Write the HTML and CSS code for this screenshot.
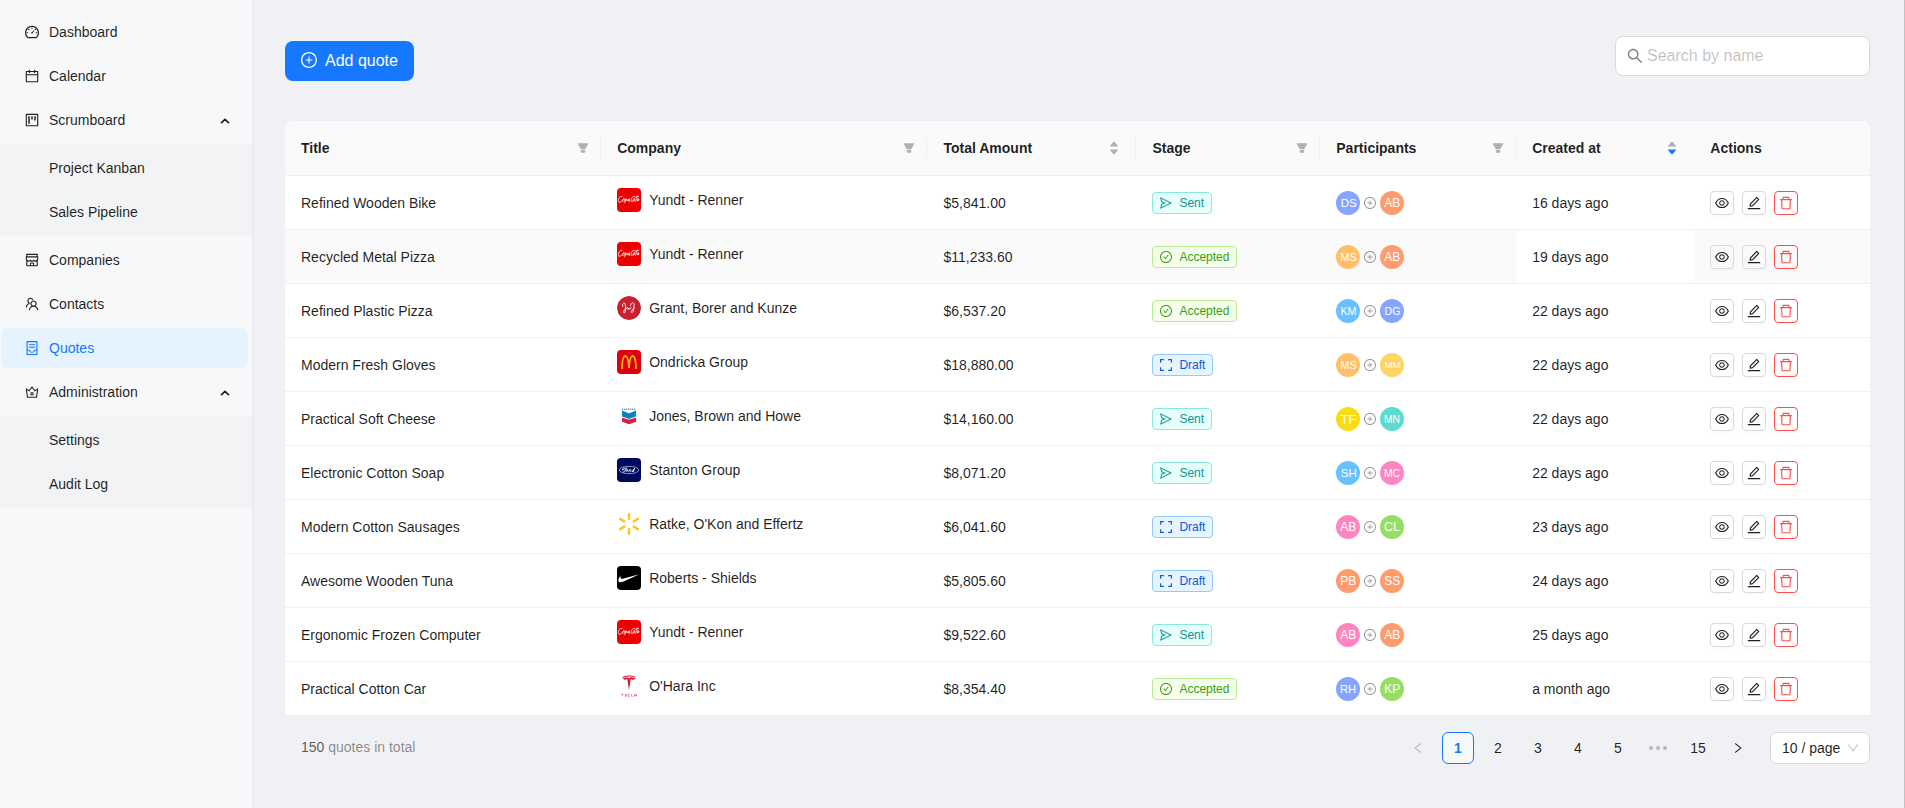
FILE: index.html
```html
<!DOCTYPE html>
<html lang="en">
<head>
<meta charset="utf-8">
<title>Quotes</title>
<link rel="stylesheet" href="styles.css">
</head>
<body>
<svg class="sprite" aria-hidden="true">
  <symbol id="i-dashboard" viewBox="64 64 896 896"><path d="M924.8 385.6a446.7 446.7 0 00-96-142.4 446.7 446.7 0 00-142.4-96C631.1 123.8 572.5 112 512 112s-119.1 11.8-174.4 35.2a446.7 446.7 0 00-142.4 96 446.7 446.7 0 00-96 142.4C75.8 440.9 64 499.5 64 560c0 132.7 58.3 257.7 159.9 343.1l1.7 1.4c5.8 4.8 13.1 7.5 20.6 7.5h531.7c7.5 0 14.8-2.7 20.6-7.5l1.7-1.4C901.7 817.7 960 692.7 960 560c0-60.5-11.9-119.1-35.2-174.4zM761.4 836H262.6A371.12 371.12 0 01140 560c0-99.4 38.7-192.8 109-263 70.3-70.3 163.7-109 263-109 99.4 0 192.8 38.7 263 109 70.3 70.3 109 163.7 109 263 0 105.6-44.5 205.5-122.6 276zM623.5 421.5a8.03 8.03 0 00-11.3 0L527.7 506c-18.7-5-39.4-.2-54.1 14.5a55.95 55.95 0 000 79.2 55.95 55.95 0 0079.2 0 55.87 55.87 0 0014.5-54.1l84.5-84.5c3.1-3.1 3.1-8.2 0-11.3l-28.3-28.3zM490 320h44c4.4 0 8-3.6 8-8v-80c0-4.4-3.6-8-8-8h-44c-4.4 0-8 3.6-8 8v80c0 4.4 3.6 8 8 8zm260 218v44c0 4.4 3.6 8 8 8h80c4.4 0 8-3.6 8-8v-44c0-4.4-3.6-8-8-8h-80c-4.4 0-8 3.6-8 8zm12.7-197.2l-31.1-31.1a8.03 8.03 0 00-11.3 0l-56.6 56.6a8.03 8.03 0 000 11.3l31.1 31.1c3.1 3.1 8.2 3.1 11.3 0l56.6-56.6c3.1-3.1 3.1-8.2 0-11.3zm-458.6-31.1a8.03 8.03 0 00-11.3 0l-31.1 31.1a8.03 8.03 0 000 11.3l56.6 56.6c3.1 3.1 8.2 3.1 11.3 0l31.1-31.1c3.1-3.1 3.1-8.2 0-11.3l-56.6-56.6zM262 530h-80c-4.4 0-8 3.6-8 8v44c0 4.4 3.6 8 8 8h80c4.4 0 8-3.6 8-8v-44c0-4.4-3.6-8-8-8z"/></symbol>
  <symbol id="i-calendar" viewBox="64 64 896 896"><path d="M880 184H712v-64c0-4.4-3.6-8-8-8h-56c-4.4 0-8 3.6-8 8v64H384v-64c0-4.4-3.6-8-8-8h-56c-4.4 0-8 3.6-8 8v64H144c-17.7 0-32 14.3-32 32v664c0 17.7 14.3 32 32 32h736c17.7 0 32-14.3 32-32V216c0-17.7-14.3-32-32-32zm-40 656H184V460h656v380zM184 392V256h128v48c0 4.4 3.6 8 8 8h56c4.4 0 8-3.6 8-8v-48h256v48c0 4.4 3.6 8 8 8h56c4.4 0 8-3.6 8-8v-48h128v136H184z"/></symbol>
  <symbol id="i-project" viewBox="64 64 896 896"><path d="M280 752h80c4.4 0 8-3.6 8-8V280c0-4.4-3.6-8-8-8h-80c-4.4 0-8 3.6-8 8v464c0 4.4 3.6 8 8 8zm192-280h80c4.4 0 8-3.6 8-8V280c0-4.4-3.6-8-8-8h-80c-4.4 0-8 3.6-8 8v184c0 4.4 3.6 8 8 8zm192 72h80c4.4 0 8-3.6 8-8V280c0-4.4-3.6-8-8-8h-80c-4.4 0-8 3.6-8 8v256c0 4.4 3.6 8 8 8zm216-432H144c-17.7 0-32 14.3-32 32v736c0 17.7 14.3 32 32 32h736c17.7 0 32-14.3 32-32V144c0-17.7-14.3-32-32-32zm-40 728H184V184h656v656z"/></symbol>
  <symbol id="i-shop" viewBox="64 64 896 896"><path d="M882 272.1V144c0-17.7-14.3-32-32-32H174c-17.7 0-32 14.3-32 32v128.1c-16.7 1-30 14.9-30 31.9v131.7a177 177 0 0014.4 70.4c4.3 10.2 9.6 19.8 15.6 28.9v345c0 17.6 14.3 32 32 32h676c17.7 0 32-14.3 32-32V535a175 175 0 0015.6-28.9c9.5-22.3 14.4-46 14.4-70.4V304c0-17-13.3-30.9-30-31.9zM214 184h596v88H214v-88zm362 656.1H448V736h128v104.1zm234 0H640V704c0-17.7-14.3-32-32-32H416c-17.7 0-32 14.3-32 32v136.1H214V597.9c2.9 1.4 5.9 2.8 9 4 22.3 9.4 46 14.1 70.4 14.1s48-4.7 70.4-14.1c13.8-5.8 26.8-13.2 38.7-22.1.2-.1.4-.1.6 0a180.4 180.4 0 0038.7 22.1c22.3 9.4 46 14.1 70.4 14.1 24.4 0 48-4.7 70.4-14.1 13.8-5.8 26.8-13.2 38.7-22.1.2-.1.4-.1.6 0a180.4 180.4 0 0038.7 22.1c22.3 9.4 46 14.1 70.4 14.1 24.4 0 48-4.7 70.4-14.1 3-1.3 6-2.6 9-4v242.2zm30-404.4c0 59.8-49 108.3-109.3 108.3-40.8 0-76.4-22.1-95.2-54.9-2.9-5-8.1-8.1-13.9-8.1h-.6c-5.7 0-11 3.1-13.9 8.1A109.24 109.24 0 01512 544c-40.7 0-76.2-22-95-54.7-3-5.1-8.4-8.3-14.3-8.3s-11.4 3.2-14.3 8.3a109.63 109.63 0 01-95.1 54.7C233 544 184 495.5 184 435.7v-91.2c0-.3.2-.5.5-.5h655c.3 0 .5.2.5.5v91.2z"/></symbol>
  <symbol id="i-team" viewBox="64 64 896 896"><path d="M824.2 699.9a301.55 301.55 0 00-86.4-60.4C783.1 602.8 812 546.8 812 484c0-110.8-92.4-201.7-203.2-200-109.1 1.7-197 90.6-197 200 0 62.8 29 118.8 74.2 155.5a300.95 300.95 0 00-86.4 60.4C345 754.6 314 826.8 312 903.8a8 8 0 008 8.2h56c4.3 0 7.9-3.4 8-7.7 1.9-58 25.4-112.3 66.7-153.5A226.62 226.62 0 01612 684c60.9 0 118.2 23.7 161.3 66.8C814.6 792 838 846.3 840 904.3c.1 4.3 3.7 7.7 8 7.7h56a8 8 0 008-8.2c-2-77-33-149.2-87.8-203.9zM612 612c-34.2 0-66.4-13.3-90.5-37.5a126.86 126.86 0 01-37.5-91.8c.3-32.8 13.4-64.5 36.3-88 24-24.6 56.1-38.3 90.4-38.7 33.9-.3 66.8 12.9 91 36.6 24.8 24.3 38.4 56.8 38.4 91.4 0 34.2-13.3 66.3-37.5 90.5A127.3 127.3 0 01612 612zM361.5 510.4c-.9-8.7-1.4-17.5-1.4-26.4 0-15.9 1.5-31.4 4.3-46.5.7-3.6-1.2-7.3-4.5-8.8-13.6-6.1-26.1-14.5-36.9-25.1a127.54 127.54 0 01-38.7-95.4c.9-32.1 13.8-62.6 36.3-85.6 24.7-25.3 57.9-39.1 93.2-38.7 31.9.3 62.7 12.6 86 34.4 7.9 7.4 14.7 15.6 20.4 24.4 2 3.1 5.9 4.4 9.3 3.2 17.6-6.1 36.2-10.4 55.3-12.4 5.6-.6 8.8-6.6 6.3-11.6-32.5-64.3-98.9-108.7-175.7-109.9-110.9-1.7-203.3 89.2-203.3 199.9 0 62.8 28.9 118.8 74.2 155.5-31.8 14.7-61.1 35-86.5 60.4-54.8 54.7-85.8 126.9-87.8 204a8 8 0 008 8.2h56.1c4.3 0 7.9-3.4 8-7.7 1.9-58 25.4-112.3 66.7-153.5 29.4-29.4 65.4-49.8 104.7-59.7 3.9-1 6.5-4.7 6-8.7z"/></symbol>
  <symbol id="i-container" viewBox="64 64 896 896"><path d="M832 64H192c-17.7 0-32 14.3-32 32v832c0 17.7 14.3 32 32 32h640c17.7 0 32-14.3 32-32V96c0-17.7-14.3-32-32-32zm-40 824H232V687h97.9c11.6 32.8 32 62.3 59.1 84.7 34.5 28.5 78.2 44.3 123 44.3s88.5-15.7 123-44.3c27.1-22.4 47.5-51.9 59.1-84.7H792v201zm0-264H643.6l-5.2 24.7C626.4 708.5 573.2 752 512 752s-114.4-43.5-126.5-103.3l-5.2-24.7H232V136h560v488zM320 341h384c4.4 0 8-3.6 8-8v-48c0-4.4-3.6-8-8-8H320c-4.4 0-8 3.6-8 8v48c0 4.4 3.6 8 8 8zm0 160h384c4.4 0 8-3.6 8-8v-48c0-4.4-3.6-8-8-8H320c-4.4 0-8 3.6-8 8v48c0 4.4 3.6 8 8 8z"/></symbol>
  <symbol id="i-crown" viewBox="64 64 896 896"><path d="M899.6 276.5L705 396.4 518.4 147.5a8.06 8.06 0 00-12.9 0L319 396.4 124.3 276.5c-5.7-3.5-13.1 1.2-12.2 7.9L188.5 865c1.1 7.9 7.9 14 16 14h615.1c8 0 14.9-6 15.9-14l76.4-580.6c.8-6.7-6.5-11.4-12.3-7.9zm-126 534.1H250.3l-53.8-409.4 139.8 86.1L512 252.9l175.7 234.4 139.8-86.1-53.9 409.4zM512 509c-62.1 0-112.6 50.5-112.6 112.6S449.9 734.2 512 734.2s112.6-50.5 112.6-112.6S574.1 509 512 509zm0 160.9c-26.6 0-48.2-21.6-48.2-48.3 0-26.6 21.6-48.3 48.2-48.3s48.2 21.6 48.2 48.3c0 26.6-21.6 48.3-48.2 48.3z"/></symbol>
  <symbol id="i-plus" viewBox="64 64 896 896"><path d="M696 480H544V328c0-4.4-3.6-8-8-8h-48c-4.4 0-8 3.6-8 8v152H328c-4.4 0-8 3.6-8 8v48c0 4.4 3.6 8 8 8h152v152c0 4.4 3.6 8 8 8h48c4.4 0 8-3.6 8-8V544h152c4.4 0 8-3.6 8-8v-48c0-4.4-3.6-8-8-8z"/><path d="M512 64C264.6 64 64 264.6 64 512s200.6 448 448 448 448-200.6 448-448S759.4 64 512 64zm0 820c-205.4 0-372-166.6-372-372s166.6-372 372-372 372 166.6 372 372-166.6 372-372 372z"/></symbol>
  <symbol id="i-check" viewBox="64 64 896 896"><path d="M699 353h-46.9c-10.2 0-19.9 4.9-25.9 13.3L469 584.3l-71.2-98.8c-6-8.3-15.6-13.3-25.9-13.3H325c-6.5 0-10.3 7.4-6.5 12.7l124.6 172.8a31.8 31.8 0 0051.7 0l210.6-292c3.9-5.3.1-12.7-6.4-12.7z"/><path d="M512 64C264.6 64 64 264.6 64 512s200.6 448 448 448 448-200.6 448-448S759.4 64 512 64zm0 820c-205.4 0-372-166.6-372-372s166.6-372 372-372 372 166.6 372 372-166.6 372-372 372z"/></symbol>
  <symbol id="i-search" viewBox="64 64 896 896"><path d="M909.6 854.5L649.9 594.8C690.2 542.7 712 479 712 412c0-80.2-31.3-155.4-87.9-212.1-56.6-56.7-132-87.9-212.1-87.9s-155.5 31.3-212.1 87.9C143.2 256.5 112 331.8 112 412c0 80.1 31.3 155.5 87.9 212.1C256.5 680.8 331.8 712 412 712c67 0 130.6-21.8 182.7-62l259.7 259.6a8.2 8.2 0 0011.6 0l43.6-43.5a8.2 8.2 0 000-11.6zM570.4 570.4C528 612.7 471.8 636 412 636s-116-23.3-158.4-65.6C211.3 528 188 471.8 188 412s23.3-116.1 65.6-158.4C296 211.3 352.2 188 412 188s116.1 23.2 158.4 65.6S636 352.2 636 412s-23.3 116.1-65.6 158.4z"/></symbol>
  <symbol id="i-filter" viewBox="64 64 896 896"><path d="M349 838c0 17.7 14.2 32 31.8 32h262.4c17.6 0 31.8-14.3 31.8-32V642H349v196zm531.1-684H143.9c-24.5 0-39.8 26.7-27.5 48l221.3 376h348.8l221.3-376c12.1-21.3-3.2-48-27.7-48z"/></symbol>
  <symbol id="i-caret-up" viewBox="0 0 1024 1024"><path d="M858.9 689L530.5 308.2c-9.4-10.9-27.5-10.9-37 0L165.1 689c-12.2 14.2-1.2 35 18.5 35h656.8c19.7 0 30.7-20.8 18.5-35z"/></symbol>
  <symbol id="i-caret-down" viewBox="0 0 1024 1024"><path d="M840.4 300H183.6c-19.7 0-30.7 20.8-18.5 35l328.4 380.8c9.4 10.9 27.5 10.9 37 0L858.9 335c12.2-14.2 1.2-35-18.5-35z"/></symbol>
  <symbol id="i-eye" viewBox="64 64 896 896"><path d="M942.2 486.2C847.4 286.5 704.1 186 512 186c-192.2 0-335.4 100.5-430.2 300.3a60.3 60.3 0 000 51.5C176.6 737.5 319.9 838 512 838c192.2 0 335.4-100.5 430.2-300.3 7.7-16.2 7.7-35 0-51.5zM512 766c-161.3 0-279.4-81.8-362.7-254C232.6 339.8 350.7 258 512 258c161.3 0 279.4 81.8 362.7 254C791.5 684.2 673.4 766 512 766zm-4-430c-97.2 0-176 78.8-176 176s78.8 176 176 176 176-78.8 176-176-78.8-176-176-176zm0 288c-61.9 0-112-50.1-112-112s50.1-112 112-112 112 50.1 112 112-50.1 112-112 112z"/></symbol>
  <symbol id="i-edit" viewBox="64 64 896 896"><path d="M257.7 752c2 0 4-.2 6-.5L431.9 722c2-.4 3.9-1.3 5.3-2.8l423.9-423.9a9.96 9.96 0 000-14.1L694.9 114.9c-1.9-1.9-4.4-2.9-7.1-2.9s-5.2 1-7.1 2.9L256.8 538.8c-1.5 1.5-2.4 3.3-2.8 5.3l-29.5 168.2a33.5 33.5 0 009.4 29.8c6.6 6.4 14.9 9.9 23.8 9.9zm67.4-174.4L687.8 215l73.3 73.3-362.7 362.6-88.9 15.7 15.6-89zM880 836H144c-17.7 0-32 14.3-32 32v36c0 4.4 3.6 8 8 8h784c4.4 0 8-3.6 8-8v-36c0-17.7-14.3-32-32-32z"/></symbol>
  <symbol id="i-delete" viewBox="64 64 896 896"><path d="M360 184h-8c4.4 0 8-3.6 8-8v8h304v-8c0 4.4 3.6 8 8 8h-8v72h72v-80c0-35.3-28.7-64-64-64H352c-35.3 0-64 28.7-64 64v80h72v-72zm504 72H160c-17.7 0-32 14.3-32 32v32c0 4.4 3.6 8 8 8h60.4l24.7 523c1.6 34.1 29.8 61 63.9 61h454c34.2 0 62.3-26.8 63.9-61l24.7-523H888c4.4 0 8-3.6 8-8v-32c0-17.7-14.3-32-32-32zM731.3 840H292.7l-24.2-512h487l-24.2 512z"/></symbol>
  <symbol id="i-send" viewBox="64 64 896 896"><path d="M931.4 498.9L94.9 79.5c-3.4-1.7-7.3-2.1-11-1.2a15.99 15.99 0 00-11.7 19.3l86.2 352.2c1.3 5.3 5.2 9.6 10.4 11.3l147.7 50.7-147.6 50.7c-5.2 1.8-9.1 6-10.3 11.3L72.2 926.5c-.9 3.7-.5 7.6 1.2 10.9 3.9 7.9 13.5 11.1 21.5 7.2l836.5-417c3.1-1.5 5.6-4.1 7.2-7.1 3.9-8 .7-17.6-7.2-21.6zM170.8 826.3l50.3-205.6 295.2-101.3c2.3-.8 4.2-2.6 5-5 1.4-4.2-.8-8.7-5-10.2L221.1 403 171 198.2l628 314.9-628.2 313.2z"/></symbol>
  <symbol id="i-draft" viewBox="0 0 12 12"><path fill="none" stroke="currentColor" stroke-width="1.1" d="M.6 3.8V.6h3.200M8.200 .6h3.200v3.200M11.400 8.200v3.200H8.200M3.800 11.400H.6V8.200"/></symbol>
  <symbol id="i-chevron" viewBox="0 0 10 6"><path fill="none" stroke="currentColor" stroke-width="1.7" stroke-linecap="round" d="M1.5 4.6L5 1.3l3.5 3.3"/></symbol>
  <symbol id="i-left" viewBox="64 64 896 896"><path d="M724 218.3V141c0-6.7-7.7-10.4-12.9-6.3L260.3 486.8a31.86 31.86 0 000 50.3l450.8 352.1c5.3 4.1 12.9.4 12.9-6.3v-77.3c0-4.900-2.300-9.600-6.100-12.600l-360-281 360-281.100c3.800-3 6.100-7.700 6.100-12.600z"/></symbol>
  <symbol id="i-right" viewBox="64 64 896 896"><path d="M765.7 486.8L314.9 134.7A7.97 7.97 0 00302 141v77.3c0 4.9 2.3 9.6 6.1 12.6l360 281.1-360 281.1c-3.9 3-6.1 7.7-6.1 12.6V883c0 6.7 7.7 10.4 12.9 6.3l450.8-352.1a31.96 31.96 0 000-50.4z"/></symbol>
  <symbol id="i-down" viewBox="64 64 896 896"><path d="M884 256h-75c-5.1 0-9.9 2.5-12.9 6.6L512 654.2 227.9 262.6c-3-4.1-7.8-6.6-12.9-6.6h-75c-6.5 0-10.3 7.4-6.5 12.7l352.6 486.1c12.8 17.6 39 17.6 51.7 0l352.6-486.1c3.9-5.3.1-12.7-6.4-12.7z"/></symbol>
  <symbol id="i-dots" viewBox="0 0 18 4"><circle cx="2" cy="2" r="1.9"/><circle cx="9" cy="2" r="1.9"/><circle cx="16" cy="2" r="1.9"/></symbol>

  <symbol id="l-cola" viewBox="0 0 24 24"><path fill="#ee0000" d="M0 0h24v24H0z"/><path fill="#dc0000" d="M10 0q4 3 3 8l-3 6q1 6 7 10h-4Q6 18 8 12z" opacity=".5"/><g fill="none" stroke="#fff" stroke-width=".9" stroke-linecap="round" opacity=".8"><path d="M5 8.400Q3.200 7.600 1.900 10.200t.1 4.200q1.400.6 2.800-1.600M6.800 10.800q-1.800.6-1.500 2.400.8 1 1.900-.8.600-1.600-.4-1.600zM8.600 11l-1 3.800M9 11q1.600-.4.900 1.200t-1.800.8M12.200 10.800q-1.900.2-1.700 2 1.200.8 2-1.500l-.2 2.200M17.400 8.200q-3 .4-3.600 3.800 0 2.600 2.600.8M17.200 10.800q-1.600.6-1 2.200 1.400.2 1.600-1.200 0-1-.6-1zM20.200 7.800l-1.600 5.400M18 9.200q2 .4 3.800-.8M21.600 10.600q-1.800.2-1.500 2.200 1.200.2 1.700-1.600l-.2 1.600"/></g></symbol>
  <symbol id="l-jj" viewBox="0 0 24 24"><circle cx="12" cy="12" r="12" fill="#c91f2e"/><g fill="none" stroke="#fff" stroke-width="1" stroke-linecap="round" opacity=".85"><path d="M5.600 10.400Q5 7.400 6.800 7q2-.2 1.700 3.600 0 6.400-1.500 6.400-1.300-.6.600-3.400l3.200-2.200v1.800l1.200-1v1.200l2.200-1.600M13.400 9.800Q13.800 6.600 16 6.600q1.800.4 1 4.200-.6 6-2.200 6-1.200-.8.6-3.200l2.200-1.800"/></g></symbol>
  <symbol id="l-arches" viewBox="0 0 24 24"><path fill="#dd0010" d="M0 0h24v24H0z"/><path fill="none" stroke="#ffbc0d" stroke-width="1.8" d="M4.900 19Q5.200 6 8.400 5.800q3 .2 3.600 12.200.6-12 3.600-12.200Q18.800 6 19.100 19"/></symbol>
  <symbol id="l-chevrons" viewBox="0 0 24 24"><path fill="#fff" d="M0 0h24v24H0z"/><path stroke="#1c76b2" stroke-width="1.500" stroke-dasharray="1.300 .7" opacity=".7" d="M5 5.200h14"/><path fill="#0a84c1" d="M5 6.500l7 2.700 7-2.700v5.700l-7 2.500-7-2.500z"/><path fill="#fff" d="M8 6.700h8l-4 2.600z"/><path fill="#1c7fc0" d="M5 11l7 2.600 7-2.600v1.200l-7 2.500-7-2.500z"/><path fill="#dc1e3e" d="M5 13.400l7 2.400 7-2.400v4.300l-7 2.500-7-2.500z"/></symbol>
  <symbol id="l-oval" viewBox="0 0 24 24"><path fill="#00095b" d="M0 0h24v24H0z"/><ellipse cx="12" cy="12" rx="9.700" ry="3.700" fill="none" stroke="#a9b4dc" stroke-width=".8"/><path fill="none" stroke="#e4e8f6" stroke-width=".85" stroke-linecap="round" d="M9.400 10.200Q5.600 9.600 5 11.600q.6 1 1.700 0M9.700 9.900L7.500 14H6M7.800 12h1.700M10.500 11.900q-1.200.3-.8 1.600 1.200 0 1.300-1.500M12.400 11.800l-.6 2M12.600 12.400q1.800-1.600 1.500-.2l-.5 1.600M16.600 12q-1.600-.1-1.400 1.500 1.400.2 1.500-1.400l1-2.100-1.300 3.700"/></symbol>
  <symbol id="l-spark" viewBox="0 0 24 24"><path fill="#fff" d="M0 0h24v24H0z"/><path fill="none" stroke="#ffc220" stroke-width="2.500" stroke-linecap="round" d="M12 2.200v4.600M12 17.200v4.600M3.200 6.900l4.100 2.400M16.700 14.700l4.100 2.400M3.200 17.100l4.100-2.400M16.700 9.300l4.100-2.400"/></symbol>
  <symbol id="l-swoosh" viewBox="0 0 24 24"><path d="M0 0h24v24H0z" fill="#000"/><path fill="#fff" d="M22.400 8.200L6.600 15.500Q3.400 17 1.800 15.700.2 14 3.700 9.300q-1 2.700.2 3.300.9.400 2.700 0z"/></symbol>
  <symbol id="l-tee" viewBox="0 0 24 24"><path fill="#fff" d="M0 0h24v24H0z"/><path fill="#e31937" d="M5.200 2.900Q12 .3 18.800 2.900l-.3.700Q12 1.500 5.500 3.600zM12 16.600L10.300 5.300Q8.500 5.200 8.400 6 6.300 5.600 5.600 4.100 9.300 3 10.900 3.200L12 4.500l1.100-1.300q1.600-.2 5.300.9-.7 1.500-2.800 1.900-.1-.8-1.900-.7z"/><path stroke="#e31937" stroke-width=".7" opacity=".65" fill="none" d="M4.300 20.300h2.200M5.400 20.300v2M10 20.300H8.200v1h1.700v1H8M13 20.300h-1.700v2H13M14.500 20v2.300h1.800M17.500 22.500v-2h2v2M17.500 21.500h2"/></symbol>
</svg>

<div class="app">
  <aside class="sider">
    <nav class="menu">
      <a class="item"><svg><use href="#i-dashboard"/></svg><span>Dashboard</span></a>
      <a class="item"><svg><use href="#i-calendar"/></svg><span>Calendar</span></a>
      <a class="item"><svg><use href="#i-project"/></svg><span>Scrumboard</span><svg class="arrow"><use href="#i-chevron"/></svg></a>
      <div class="submenu"><a class="item sub">Project Kanban</a><a class="item sub">Sales Pipeline</a></div>
      <a class="item"><svg><use href="#i-shop"/></svg><span>Companies</span></a>
      <a class="item"><svg><use href="#i-team"/></svg><span>Contacts</span></a>
      <a class="item selected"><svg><use href="#i-container"/></svg><span>Quotes</span></a>
      <a class="item"><svg><use href="#i-crown"/></svg><span>Administration</span><svg class="arrow"><use href="#i-chevron"/></svg></a>
      <div class="submenu"><a class="item sub">Settings</a><a class="item sub">Audit Log</a></div>
    </nav>
  </aside>

  <main class="content">
    <header class="toolbar">
      <button class="add"><svg><use href="#i-plus"/></svg>Add quote</button>
      <label class="search"><svg><use href="#i-search"/></svg><input type="text" placeholder="Search by name"></label>
    </header>

    <section class="table">
      <div class="row head">
        <div class="th">Title<svg class="filter"><use href="#i-filter"/></svg></div>
        <div class="th">Company<svg class="filter"><use href="#i-filter"/></svg></div>
        <div class="th">Total Amount<span class="sorter"><svg><use href="#i-caret-up"/></svg><svg><use href="#i-caret-down"/></svg></span></div>
        <div class="th">Stage<svg class="filter"><use href="#i-filter"/></svg></div>
        <div class="th">Participants<svg class="filter"><use href="#i-filter"/></svg></div>
        <div class="th plain">Created at<span class="sorter desc"><svg><use href="#i-caret-up"/></svg><svg><use href="#i-caret-down"/></svg></span></div>
        <div class="th plain">Actions</div>
      </div>

      <div class="row">
        <div class="td">Refined Wooden Bike</div>
        <div class="td company"><svg><use href="#l-cola"/></svg>Yundt - Renner</div>
        <div class="td">$5,841.00</div>
        <div class="td"><span class="tag sent"><svg><use href="#i-send"/></svg>Sent</span></div>
        <div class="td people"><span class="avatar indigo"><b style="--s:.823">DS</b></span><svg><use href="#i-plus"/></svg><span class="avatar coral"><b style="--s:.857">AB</b></span></div>
        <div class="td sorted">16 days ago</div>
        <div class="td actions"><button><svg><use href="#i-eye"/></svg></button><button><svg><use href="#i-edit"/></svg></button><button class="danger"><svg><use href="#i-delete"/></svg></button></div>
      </div>
      <div class="row hover">
        <div class="td">Recycled Metal Pizza</div>
        <div class="td company"><svg><use href="#l-cola"/></svg>Yundt - Renner</div>
        <div class="td">$11,233.60</div>
        <div class="td"><span class="tag accepted"><svg><use href="#i-check"/></svg>Accepted</span></div>
        <div class="td people"><span class="avatar orange"><b style="--s:.762">MS</b></span><svg><use href="#i-plus"/></svg><span class="avatar coral"><b style="--s:.857">AB</b></span></div>
        <div class="td sorted">19 days ago</div>
        <div class="td actions"><button><svg><use href="#i-eye"/></svg></button><button><svg><use href="#i-edit"/></svg></button><button class="danger"><svg><use href="#i-delete"/></svg></button></div>
      </div>
      <div class="row">
        <div class="td">Refined Plastic Pizza</div>
        <div class="td company"><svg class="round"><use href="#l-jj"/></svg>Grant, Borer and Kunze</div>
        <div class="td">$6,537.20</div>
        <div class="td"><span class="tag accepted"><svg><use href="#i-check"/></svg>Accepted</span></div>
        <div class="td people"><span class="avatar sky"><b style="--s:.762">KM</b></span><svg><use href="#i-plus"/></svg><span class="avatar indigo"><b style="--s:.762">DG</b></span></div>
        <div class="td sorted">22 days ago</div>
        <div class="td actions"><button><svg><use href="#i-eye"/></svg></button><button><svg><use href="#i-edit"/></svg></button><button class="danger"><svg><use href="#i-delete"/></svg></button></div>
      </div>
      <div class="row">
        <div class="td">Modern Fresh Gloves</div>
        <div class="td company"><svg><use href="#l-arches"/></svg>Ondricka Group</div>
        <div class="td">$18,880.00</div>
        <div class="td"><span class="tag draft"><svg><use href="#i-draft"/></svg>Draft</span></div>
        <div class="td people"><span class="avatar orange"><b style="--s:.762">MS</b></span><svg><use href="#i-plus"/></svg><span class="avatar gold"><b style="--s:.686">MM</b></span></div>
        <div class="td sorted">22 days ago</div>
        <div class="td actions"><button><svg><use href="#i-eye"/></svg></button><button><svg><use href="#i-edit"/></svg></button><button class="danger"><svg><use href="#i-delete"/></svg></button></div>
      </div>
      <div class="row">
        <div class="td">Practical Soft Cheese</div>
        <div class="td company"><svg><use href="#l-chevrons"/></svg>Jones, Brown and Howe</div>
        <div class="td">$14,160.00</div>
        <div class="td"><span class="tag sent"><svg><use href="#i-send"/></svg>Sent</span></div>
        <div class="td people"><span class="avatar yellow"><b style="--s:.936">TF</b></span><svg><use href="#i-plus"/></svg><span class="avatar teal"><b style="--s:.735">MN</b></span></div>
        <div class="td sorted">22 days ago</div>
        <div class="td actions"><button><svg><use href="#i-eye"/></svg></button><button><svg><use href="#i-edit"/></svg></button><button class="danger"><svg><use href="#i-delete"/></svg></button></div>
      </div>
      <div class="row">
        <div class="td">Electronic Cotton Soap</div>
        <div class="td company"><svg><use href="#l-oval"/></svg>Stanton Group</div>
        <div class="td">$8,071.20</div>
        <div class="td"><span class="tag sent"><svg><use href="#i-send"/></svg>Sent</span></div>
        <div class="td people"><span class="avatar sky"><b style="--s:.823">SH</b></span><svg><use href="#i-plus"/></svg><span class="avatar pink"><b style="--s:.735">MC</b></span></div>
        <div class="td sorted">22 days ago</div>
        <div class="td actions"><button><svg><use href="#i-eye"/></svg></button><button><svg><use href="#i-edit"/></svg></button><button class="danger"><svg><use href="#i-delete"/></svg></button></div>
      </div>
      <div class="row">
        <div class="td">Modern Cotton Sausages</div>
        <div class="td company"><svg><use href="#l-spark"/></svg>Ratke, O'Kon and Effertz</div>
        <div class="td">$6,041.60</div>
        <div class="td"><span class="tag draft"><svg><use href="#i-draft"/></svg>Draft</span></div>
        <div class="td people"><span class="avatar pink"><b style="--s:.857">AB</b></span><svg><use href="#i-plus"/></svg><span class="avatar green"><b style="--s:.89">CL</b></span></div>
        <div class="td sorted">23 days ago</div>
        <div class="td actions"><button><svg><use href="#i-eye"/></svg></button><button><svg><use href="#i-edit"/></svg></button><button class="danger"><svg><use href="#i-delete"/></svg></button></div>
      </div>
      <div class="row">
        <div class="td">Awesome Wooden Tuna</div>
        <div class="td company"><svg><use href="#l-swoosh"/></svg>Roberts - Shields</div>
        <div class="td">$5,805.60</div>
        <div class="td"><span class="tag draft"><svg><use href="#i-draft"/></svg>Draft</span></div>
        <div class="td people"><span class="avatar coral"><b style="--s:.857">PB</b></span><svg><use href="#i-plus"/></svg><span class="avatar coral"><b style="--s:.857">SS</b></span></div>
        <div class="td sorted">24 days ago</div>
        <div class="td actions"><button><svg><use href="#i-eye"/></svg></button><button><svg><use href="#i-edit"/></svg></button><button class="danger"><svg><use href="#i-delete"/></svg></button></div>
      </div>
      <div class="row">
        <div class="td">Ergonomic Frozen Computer</div>
        <div class="td company"><svg><use href="#l-cola"/></svg>Yundt - Renner</div>
        <div class="td">$9,522.60</div>
        <div class="td"><span class="tag sent"><svg><use href="#i-send"/></svg>Sent</span></div>
        <div class="td people"><span class="avatar pink"><b style="--s:.857">AB</b></span><svg><use href="#i-plus"/></svg><span class="avatar coral"><b style="--s:.857">AB</b></span></div>
        <div class="td sorted">25 days ago</div>
        <div class="td actions"><button><svg><use href="#i-eye"/></svg></button><button><svg><use href="#i-edit"/></svg></button><button class="danger"><svg><use href="#i-delete"/></svg></button></div>
      </div>
      <div class="row">
        <div class="td">Practical Cotton Car</div>
        <div class="td company"><svg><use href="#l-tee"/></svg>O'Hara Inc</div>
        <div class="td">$8,354.40</div>
        <div class="td"><span class="tag accepted"><svg><use href="#i-check"/></svg>Accepted</span></div>
        <div class="td people"><span class="avatar indigo"><b style="--s:.8">RH</b></span><svg><use href="#i-plus"/></svg><span class="avatar green"><b style="--s:.857">KP</b></span></div>
        <div class="td sorted">a month ago</div>
        <div class="td actions"><button><svg><use href="#i-eye"/></svg></button><button><svg><use href="#i-edit"/></svg></button><button class="danger"><svg><use href="#i-delete"/></svg></button></div>
      </div>
    </section>

    <footer class="footer">
      <div class="total"><span>150</span> quotes in total</div>
      <div class="pager">
        <span class="page disabled"><svg><use href="#i-left"/></svg></span>
        <span class="page active">1</span>
        <span class="page">2</span>
        <span class="page">3</span>
        <span class="page">4</span>
        <span class="page">5</span>
        <span class="page disabled"><svg class="dots"><use href="#i-dots"/></svg></span>
        <span class="page">15</span>
        <span class="page"><svg><use href="#i-right"/></svg></span>
        <div class="size">10 / page<svg><use href="#i-down"/></svg></div>
      </div>
    </footer>
  </main>
</div>
</body>
</html>
```
FILE: styles.css
```css
* { box-sizing: border-box; }
body {
  margin: 0;
  background: #f0f1f5;
  color: rgba(0, 0, 0, .88);
  font: 14px/22px "Liberation Sans", Arial, sans-serif;
}
svg { display: block; flex: none; fill: currentColor; }
.sprite { display: none; }
button { font: inherit; color: inherit; margin: 0; }

.app { display: flex; height: 808px; overflow: hidden; border-right: 1px solid #c1c1c4; }
.sider { width: 253px; flex: none; background: #f7f8fa; border-right: 1px solid #e6e7ea; }
.menu { padding-top: 8px; }
.item {
  display: flex;
  align-items: center;
  gap: 10px;
  height: 40px;
  margin: 4px 4px 4px 1px;
  padding: 0 18px 0 24px;
  border-radius: 8px;
}
.item + .item { margin-top: 4px; }
.item svg { width: 14px; height: 14px; }
.item .arrow { width: 10px; height: 6px; margin: 2px 0 0 auto; }
.item.selected { background: #e5f3ff; color: #1677ff; }
.submenu { background: #f1f3f5; overflow: hidden; padding: 4px 0; }
.submenu .item { margin: 0 4px 4px 1px; padding-left: 48px; }
.submenu .item:last-child { margin-bottom: 0; }
.submenu + .item { margin-top: 4px; }

.content { flex: 1; padding: 36px 34px 0 32px; min-width: 0; }
.toolbar { display: flex; justify-content: space-between; align-items: flex-start; height: 85px; font-size: 16px; }
.add {
  display: flex;
  align-items: center;
  gap: 8px;
  height: 40px;
  margin-top: 5px;
  padding: 0 16px;
  border: 0;
  border-radius: 8px;
  background: #1677ff;
  color: #fff;
}
.add svg { width: 16px; height: 16px; margin-bottom: 2px; }
.search {
  display: flex;
  align-items: center;
  gap: 4px;
  width: 255px;
  height: 40px;
  padding: 0 11px;
  background: #fff;
  border: 1px solid #d9d9d9;
  border-radius: 8px;
}
.search svg { width: 16px; height: 16px; color: rgba(0, 0, 0, .5); }
.search input { flex: 1; min-width: 0; border: 0; padding: 0; outline: 0; background: none; font: inherit; }
.search input::placeholder { color: rgba(0, 0, 0, .25); }

.table { border-radius: 8px 8px 0 0; overflow: hidden; background: #fff; }
.row {
  display: grid;
  grid-template-columns: 316.2px 326.3px 208.9px 183.9px 195.9px 178.200px 1fr;
  height: 54px;
}
.head { height: 55px; background: #fafafa; font-weight: 700; }
.th, .td { display: flex; align-items: center; padding: 0 16px; border-bottom: 1px solid #f0f0f0; }
.th { justify-content: space-between; padding-right: 12px; background: linear-gradient(#f0f0f0, #f0f0f0) right center / 1px 22px no-repeat; }
.th.plain { background: none; }
.filter { width: 12px; height: 12px; color: rgba(0, 0, 0, .29); }
.sorter { width: 12px; margin-right: 4px; color: rgba(0, 0, 0, .29); }
.sorter svg { width: 12px; height: 12px; }
.sorter svg + svg { margin-top: -4px; }
.desc svg + svg { color: #1677ff; }
.hover { background: #fafafa; }
.hover .sorted { background: #fff; }
.company { gap: 8px; align-items: flex-start; padding-top: 12px; line-height: 24px; }
.company svg { width: 24px; height: 24px; border-radius: 4px; }
.company .round { border-radius: 50%; }

.tag {
  display: flex;
  align-items: center;
  gap: 7px;
  height: 22px;
  padding: 0 7px;
  border: 1px solid;
  border-radius: 4px;
  font-size: 12px;
  line-height: 20px;
}
.tag svg { width: 12px; height: 12px; }
.sent { color: #08979c; background: #e6fffb; border-color: #87e8de; }
.accepted { color: #389e0d; background: #f6ffed; border-color: #b7eb8f; }
.draft { color: #0958d9; background: #e6f4ff; border-color: #91caff; }

.people { gap: 4px; }
.people svg { width: 12px; height: 12px; color: rgba(0, 0, 0, .4); }
.avatar {
  display: flex;
  align-items: center;
  justify-content: center;
  width: 24px;
  height: 24px;
  border-radius: 50%;
  color: #fff;
}
.avatar b { font-weight: 400; transform: scale(var(--s)); }
.indigo { background: #87a5ff; }
.coral { background: #ff9c6e; }
.orange { background: #ffc069; }
.sky { background: #69c0ff; }
.gold { background: #ffd666; }
.yellow { background: #fadb14; }
.teal { background: #5cdbd3; }
.pink { background: #ff85c0; }
.green { background: #95de64; }

.actions { gap: 8px; }
.actions button {
  display: flex;
  align-items: center;
  justify-content: center;
  width: 24px;
  height: 24px;
  padding: 0;
  background: none;
  border: 1px solid #d9d9d9;
  border-radius: 4px;
  box-shadow: 0 2px 0 rgba(0, 0, 0, .02);
}
.actions svg { width: 14px; height: 14px; }
.actions .danger { color: #ff4d4f; border-color: #ff4d4f; }

.footer { display: flex; justify-content: space-between; align-items: flex-start; padding: 16px 0 0 16px; }
.total { padding-top: 4px; color: rgba(0, 0, 0, .45); }
.total span { color: rgba(0, 0, 0, .65); }
.pager { display: flex; gap: 8px; }
.page { display: flex; align-items: center; justify-content: center; width: 32px; height: 32px; border-radius: 6px; }
.page svg { width: 12px; height: 12px; }
.page .dots { width: 18px; height: 4px; }
.disabled { color: rgba(0, 0, 0, .25); }
.active { border: 1px solid #1677ff; background: #f7f8fa; color: #1677ff; font-weight: 700; }
.size {
  display: flex;
  align-items: center;
  justify-content: space-between;
  width: 100px;
  height: 32px;
  margin-left: 8px;
  padding: 0 10px 0 11px;
  border: 1px solid #d9d9d9;
  border-radius: 6px;
  background: #fff;
}
.size svg { width: 12px; height: 12px; color: rgba(0, 0, 0, .25); }
```
